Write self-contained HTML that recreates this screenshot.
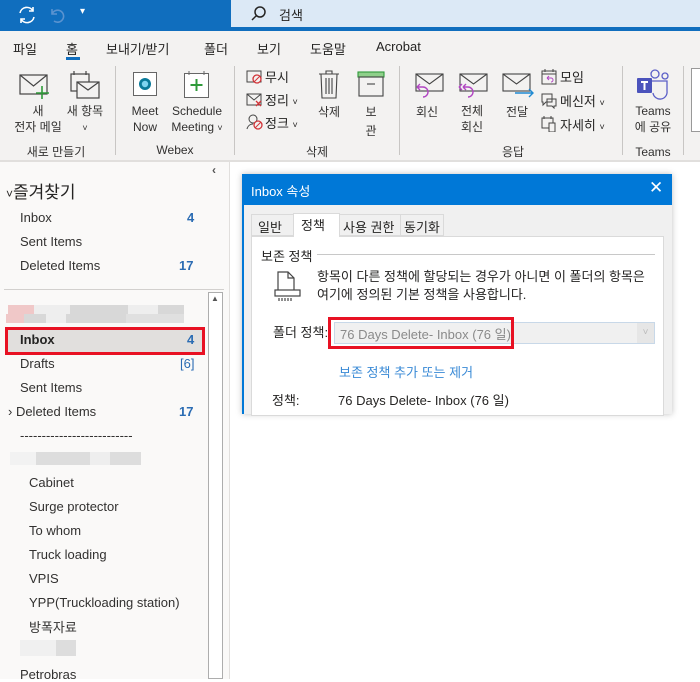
<!DOCTYPE html>
<html><head><meta charset="utf-8"><style>
*{margin:0;padding:0;box-sizing:border-box}
body{width:700px;height:679px;overflow:hidden;background:#fff;font-family:"Liberation Sans","Noto Sans CJK KR",sans-serif;color:#252423;position:relative;font-size:13px}
.a{position:absolute;white-space:nowrap}
.top{left:0;top:0;width:700px;height:31px;background:#106ebe}
.search{left:231px;top:0;width:469px;height:27px;background:#dce9f6}
.tabs{left:0;top:31px;width:700px;height:131px;background:#f3f2f1}
.rb{top:160px;left:0;width:700px;height:2px;background:#e1dfdd}
.sep{width:1px;background:#c8c6c4;top:66px;height:89px}
.lbl{font-size:12px;color:#323130;text-align:center}
.pane{left:0;top:162px;width:229px;height:517px;background:#faf9f8}
.f{font-size:13px;color:#323130}
.n{font-size:13px;color:#2b6cb3;font-weight:bold}
.dlg{left:242px;top:174px;width:430px;height:240px;background:#f0f0f0;box-shadow:0 0 6px rgba(0,0,0,.25)}
</style></head><body>
<div class="a top"></div>
<div class="a search"></div>
<svg class="a" style="left:16px;top:4px" width="22" height="22" viewBox="0 0 22 22" fill="none" stroke="#fff" stroke-width="1.6"><path d="M4 9a7 7 0 0 1 13-2M18 13a7 7 0 0 1-13 2"/><path d="M17 3v4h-4M5 19v-4h4"/></svg>
<svg class="a" style="left:48px;top:5px" width="20" height="20" viewBox="0 0 20 20" fill="none" stroke="#5a93d0" stroke-width="1.6"><path d="M4 4v5h5M4 9a6 6 0 1 1 2 7"/></svg>
<div class="a" style="left:80px;top:6px;color:#fff;font-size:10px">▾</div>
<svg class="a" style="left:250px;top:5px" width="18" height="18" viewBox="0 0 18 18" fill="none" stroke="#252423" stroke-width="1.5"><circle cx="10" cy="7" r="5"/><path d="M6.5 10.5L2 15"/></svg>
<div class="a" style="left:279px;top:5px;font-size:13px">검색</div>
<div class="a tabs"></div>
<div class="a" style="left:13px;top:39px;font-size:13px">파일</div>
<div class="a" style="left:66px;top:39px;font-size:13px">홈</div>
<div class="a" style="left:66px;top:57px;width:14px;height:3px;background:#106ebe"></div>
<div class="a" style="left:106px;top:39px;font-size:13px">보내기/받기</div>
<div class="a" style="left:204px;top:39px;font-size:13px">폴더</div>
<div class="a" style="left:257px;top:39px;font-size:13px">보기</div>
<div class="a" style="left:310px;top:39px;font-size:13px">도움말</div>
<div class="a" style="left:376px;top:39px;font-size:13px">Acrobat</div>
<div class="a sep" style="left:115px"></div>
<div class="a sep" style="left:234px"></div>
<div class="a sep" style="left:399px"></div>
<div class="a sep" style="left:622px"></div>
<div class="a sep" style="left:683px"></div>
<svg class="a" style="left:19px;top:72px" width="32" height="28" viewBox="0 0 32 28" fill="none" stroke="#444" stroke-width="1.2"><rect x="1" y="3" width="27" height="19"/><path d="M1 3l13.5 11L28 3"/><path d="M23 14v13M17 21h13" stroke="#2f9a3a" stroke-width="1.6"/></svg>
<div class="a lbl" style="left:8px;top:103px;width:60px;line-height:16px">새<br>전자 메일</div>
<svg class="a" style="left:70px;top:70px" width="32" height="30" viewBox="0 0 32 30" fill="none" stroke="#444" stroke-width="1.2"><rect x="1" y="4" width="18" height="17"/><path d="M4 1v4M16 1v4"/><rect x="7" y="12" width="22" height="16" fill="#f3f2f1"/><path d="M7 12l11 8 11-8"/></svg>
<div class="a lbl" style="left:62px;top:103px;width:46px;line-height:16px">새 항목<br><span style="font-size:9px">˅</span></div>
<div class="a lbl" style="left:16px;top:143px;width:80px">새로 만들기</div>
<svg class="a" style="left:133px;top:72px" width="24" height="24" viewBox="0 0 24 24"><rect x="0.5" y="0.5" width="23" height="23" fill="#fff" stroke="#666"/><circle cx="12" cy="12" r="6" fill="#0a7a9a"/><circle cx="12" cy="12" r="3.2" fill="#7fd4f0"/></svg>
<div class="a lbl" style="left:126px;top:103px;width:38px;line-height:16px">Meet<br>Now</div>
<svg class="a" style="left:184px;top:71px" width="25" height="27" viewBox="0 0 25 27" fill="#fff" stroke="#666"><rect x="0.5" y="2.5" width="24" height="24"/><path d="M5 0v4M20 0v4" stroke-width="1"/><path d="M12.5 8v12M6.5 14h12" stroke="#2f9a3a" stroke-width="2"/></svg>
<div class="a lbl" style="left:166px;top:103px;width:62px;line-height:16px">Schedule<br>Meeting <span style="font-size:9px">˅</span></div>
<div class="a lbl" style="left:150px;top:143px;width:50px">Webex</div>
<svg class="a" style="left:246px;top:70px" width="18" height="14" viewBox="0 0 18 14" fill="none" stroke="#444"><rect x="1" y="1" width="14" height="11"/><circle cx="11" cy="9" r="4" stroke="#d13438" fill="#f3f2f1" stroke-width="1.3"/><path d="M8 12l6-6" stroke="#d13438"/></svg>
<div class="a" style="left:265px;top:67px;font-size:13px">무시</div>
<svg class="a" style="left:246px;top:93px" width="18" height="14" viewBox="0 0 18 14" fill="none" stroke="#444"><rect x="1" y="1" width="14" height="11"/><path d="M1 1l7 6 7-6"/><path d="M10 8l5 5M15 8l-5 5" stroke="#d13438" stroke-width="1.3"/></svg>
<div class="a" style="left:265px;top:90px;font-size:13px">정리 <span style="font-size:9px">˅</span></div>
<svg class="a" style="left:246px;top:113px" width="18" height="18" viewBox="0 0 18 18" fill="none" stroke="#444"><circle cx="7" cy="6" r="4"/><path d="M1 16c1-4 4-5 6-5"/><circle cx="12" cy="12" r="4" stroke="#d13438" stroke-width="1.3"/><path d="M9 15l6-6" stroke="#d13438"/></svg>
<div class="a" style="left:265px;top:113px;font-size:13px">정크 <span style="font-size:9px">˅</span></div>
<svg class="a" style="left:318px;top:69px" width="22" height="30" viewBox="0 0 22 30" fill="none" stroke="#444" stroke-width="1.1"><path d="M1 5h20M8 5V2h6v3M3 5l1 24h14l1-24M8 9v16M11 9v16M14 9v16"/></svg>
<div class="a lbl" style="left:312px;top:103px;width:34px">삭제</div>
<svg class="a" style="left:357px;top:71px" width="28" height="26" viewBox="0 0 28 26" fill="none" stroke="#444" stroke-width="1.1"><rect x="1" y="1" width="26" height="5" fill="#8fd08a" stroke="#2f9a3a"/><rect x="2" y="6" width="24" height="19"/><path d="M10 13h8"/></svg>
<div class="a lbl" style="left:358px;top:103px;width:26px;line-height:19px">보<br>관</div>
<div class="a lbl" style="left:300px;top:143px;width:34px">삭제</div>
<svg class="a" style="left:413px;top:73px" width="32" height="28" viewBox="0 0 32 28" fill="none" stroke="#444" stroke-width="1.1"><rect x="3" y="1" width="27" height="17"/><path d="M3 1l13.5 10L30 1"/><path d="M4 14l3-3M4 14l3 3M4 14h6a5 5 0 0 1 0 10" stroke="#b146c2" stroke-width="1.4"/></svg>
<div class="a lbl" style="left:410px;top:103px;width:34px">회신</div>
<svg class="a" style="left:457px;top:73px" width="32" height="28" viewBox="0 0 32 28" fill="none" stroke="#444" stroke-width="1.1"><rect x="3" y="1" width="27" height="17"/><path d="M3 1l13.5 10L30 1"/><path d="M2 14l3-3M2 14l3 3M6 14l3-3M6 14l3 3M6 14h5a5 5 0 0 1 0 10" stroke="#b146c2" stroke-width="1.4"/></svg>
<div class="a lbl" style="left:455px;top:103px;width:34px;line-height:16px">전체<br>회신</div>
<svg class="a" style="left:501px;top:73px" width="34" height="28" viewBox="0 0 34 28" fill="none" stroke="#444" stroke-width="1.1"><rect x="2" y="1" width="27" height="17"/><path d="M2 1l13.5 10L29 1"/><path d="M14 20h18M28 16l4 4-4 4" stroke="#1f8ad2" stroke-width="1.4"/></svg>
<div class="a lbl" style="left:500px;top:103px;width:34px">전달</div>
<svg class="a" style="left:541px;top:69px" width="16" height="16" viewBox="0 0 16 16" fill="none" stroke="#444"><rect x="1" y="2" width="14" height="13"/><path d="M1 5h14M4 0v3M12 0v3"/><path d="M6 9h4a2 2 0 0 1 0 4M6 9l2-2M6 9l2 2" stroke="#b146c2"/></svg>
<div class="a" style="left:560px;top:67px;font-size:13px">모임</div>
<svg class="a" style="left:541px;top:93px" width="16" height="16" viewBox="0 0 16 16" fill="none" stroke="#444"><path d="M1 1h10v8H5l-3 3V9H1zM6 6h9v7h-2v2l-2-2H6z"/></svg>
<div class="a" style="left:560px;top:91px;font-size:13px">메신저 <span style="font-size:9px">˅</span></div>
<svg class="a" style="left:541px;top:116px" width="16" height="16" viewBox="0 0 16 16" fill="none" stroke="#444"><rect x="1" y="2" width="11" height="10"/><path d="M3 0v3M10 0v3"/><rect x="8" y="7" width="6" height="9" fill="#f3f2f1"/></svg>
<div class="a" style="left:560px;top:115px;font-size:13px">자세히 <span style="font-size:9px">˅</span></div>
<div class="a lbl" style="left:496px;top:143px;width:34px">응답</div>
<svg class="a" style="left:636px;top:69px" width="34" height="32" viewBox="0 0 34 32"><circle cx="19" cy="5" r="4" fill="none" stroke="#5b5fc7" stroke-width="1.3"/><circle cx="29" cy="7" r="3" fill="none" stroke="#5b5fc7" stroke-width="1.3"/><path d="M13 12h18v10a7 7 0 0 1-14 2" fill="none" stroke="#5b5fc7" stroke-width="1.3"/><rect x="1" y="9" width="15" height="15" rx="1" fill="#4b53bc"/><path d="M5 13h7M8.5 13v8" stroke="#fff" stroke-width="2"/></svg>
<div class="a lbl" style="left:630px;top:103px;width:46px;line-height:16px">Teams<br>에 공유</div>
<div class="a lbl" style="left:632px;top:145px;width:42px">Teams</div>
<div class="a" style="left:691px;top:68px;width:12px;height:64px;background:#fff;border:1px solid #999"></div>
<div class="a rb"></div>
<div class="a pane"></div>
<div class="a" style="left:212px;top:163px;font-size:12px;color:#555;font-weight:bold">‹</div>
<div class="a" style="left:229px;top:162px;width:1px;height:517px;background:#e1dfdd"></div>
<div class="a" style="left:6px;top:178px;font-size:17px;color:#252423"><span style="font-size:12px">˅</span>즐겨찾기</div>
<div class="a f" style="left:20px;top:210px">Inbox</div><div class="a n" style="left:187px;top:210px">4</div>
<div class="a f" style="left:20px;top:234px">Sent Items</div>
<div class="a f" style="left:20px;top:258px">Deleted Items</div><div class="a n" style="left:179px;top:258px">17</div>
<div class="a" style="left:4px;top:289px;width:220px;height:1px;background:#d2d0ce"></div>
<div class="a" style="left:208px;top:292px;width:15px;height:387px;border:1px solid #adadad;background:#fff"></div>
<div class="a" style="left:211px;top:294px;font-size:8px;color:#555">▲</div>
<div class="a" style="left:8px;top:305px;width:176px;height:9px;background:linear-gradient(90deg,#f0c8c8 0 26px,#eee 26px 62px,#d8d8d8 62px 120px,#eee 120px 150px,#d8d8d8 150px)"></div>
<div class="a" style="left:6px;top:314px;width:178px;height:9px;background:linear-gradient(90deg,#f0c8c8 0 18px,#d8d8d8 18px 40px,#eee 40px 60px,#d8d8d8 60px 120px,#e0e0e0 120px)"></div>
<div class="a" style="left:5px;top:327px;width:200px;height:28px;background:#e1dfdd;border:3px solid #e81123"></div>
<div class="a f" style="left:20px;top:332px;font-weight:bold;color:#252423">Inbox</div><div class="a n" style="left:187px;top:332px">4</div>
<div class="a f" style="left:20px;top:356px">Drafts</div><div class="a" style="left:180px;top:356px;color:#2b6cb3;font-size:13px">[6]</div>
<div class="a f" style="left:20px;top:380px">Sent Items</div>
<div class="a f" style="left:8px;top:404px">›&nbsp;Deleted Items</div><div class="a n" style="left:179px;top:404px">17</div>
<div class="a f" style="left:20px;top:428px">--------------------------</div>
<div class="a" style="left:10px;top:452px;width:131px;height:13px;background:linear-gradient(90deg,#f2f2f2 0 26px,#ddd 26px 80px,#eee 80px 100px,#ddd 100px)"></div>
<div class="a f" style="left:29px;top:475px">Cabinet</div>
<div class="a f" style="left:29px;top:499px">Surge protector</div>
<div class="a f" style="left:29px;top:523px">To whom</div>
<div class="a f" style="left:29px;top:547px">Truck loading</div>
<div class="a f" style="left:29px;top:571px">VPIS</div>
<div class="a f" style="left:29px;top:595px">YPP(Truckloading station)</div>
<div class="a f" style="left:29px;top:617px">방폭자료</div>
<div class="a" style="left:20px;top:640px;width:56px;height:16px;background:linear-gradient(90deg,#f0f0f0 0 36px,#ddd 36px)"></div>
<div class="a f" style="left:20px;top:667px">Petrobras</div>
<div class="a dlg"></div>
<div class="a" style="left:242px;top:174px;width:430px;height:31px;background:#0078d7"></div>
<div class="a" style="left:251px;top:181px;color:#fff;font-size:13px">Inbox 속성</div>
<div class="a" style="left:649px;top:178px;color:#fff;font-size:17px">✕</div>
<div class="a" style="left:251px;top:236px;width:413px;height:180px;background:#fff;border:1px solid #dadada"></div>
<div class="a" style="left:251px;top:214px;width:43px;height:22px;background:#f0f0f0;border:1px solid #dadada"></div>
<div class="a" style="left:293px;top:213px;width:47px;height:24px;background:#fff;border:1px solid #dadada;border-bottom:none"></div>
<div class="a" style="left:339px;top:214px;width:62px;height:22px;background:#f0f0f0;border:1px solid #dadada"></div>
<div class="a" style="left:400px;top:214px;width:44px;height:22px;background:#f0f0f0;border:1px solid #dadada"></div>
<div class="a" style="left:258px;top:217px;font-size:13px">일반</div>
<div class="a" style="left:301px;top:215px;font-size:13px">정책</div>
<div class="a" style="left:343px;top:217px;font-size:13px">사용 권한</div>
<div class="a" style="left:404px;top:217px;font-size:13px">동기화</div>
<div class="a" style="left:261px;top:246px;font-size:13px">보존 정책</div>
<div class="a" style="left:317px;top:254px;width:338px;height:1px;background:#c8c8c8"></div>
<svg class="a" style="left:274px;top:270px" width="28" height="32" viewBox="0 0 28 32" fill="none" stroke="#444" stroke-width="1.2"><path d="M4 20V2h10l6 6v12M14 2v6h6"/><rect x="1" y="20" width="25" height="6"/><path d="M5 28v3M8 28v3M11 28v3M14 28v3M17 28v3"/></svg>
<div class="a" style="left:317px;top:268px;font-size:13px;line-height:18px">항목이 다른 정책에 할당되는 경우가 아니면 이 폴더의 항목은<br>여기에 정의된 기본 정책을 사용합니다.</div>
<div class="a" style="left:273px;top:322px;font-size:13px">폴더 정책:</div>
<div class="a" style="left:334px;top:322px;width:321px;height:22px;background:#f0f0f0;border:1px solid #c8d8e8"></div>
<div class="a" style="left:637px;top:323px;width:17px;height:20px;background:#e6e6e6;color:#bbb;font-size:10px;text-align:center;line-height:20px">˅</div>
<div class="a" style="left:328px;top:317px;width:186px;height:32px;border:3px solid #e81123"></div>
<div class="a" style="left:340px;top:324px;font-size:13px;color:#8a8a8a">76 Days Delete- Inbox (76 일)</div>
<div class="a" style="left:339px;top:362px;font-size:13px;color:#3a8ad6">보존 정책 추가 또는 제거</div>
<div class="a" style="left:272px;top:390px;font-size:13px">정책:</div>
<div class="a" style="left:338px;top:390px;font-size:13px">76 Days Delete- Inbox (76 일)</div>
<div class="a" style="left:242px;top:174px;width:2px;height:240px;background:#0078d7"></div>
</body></html>
